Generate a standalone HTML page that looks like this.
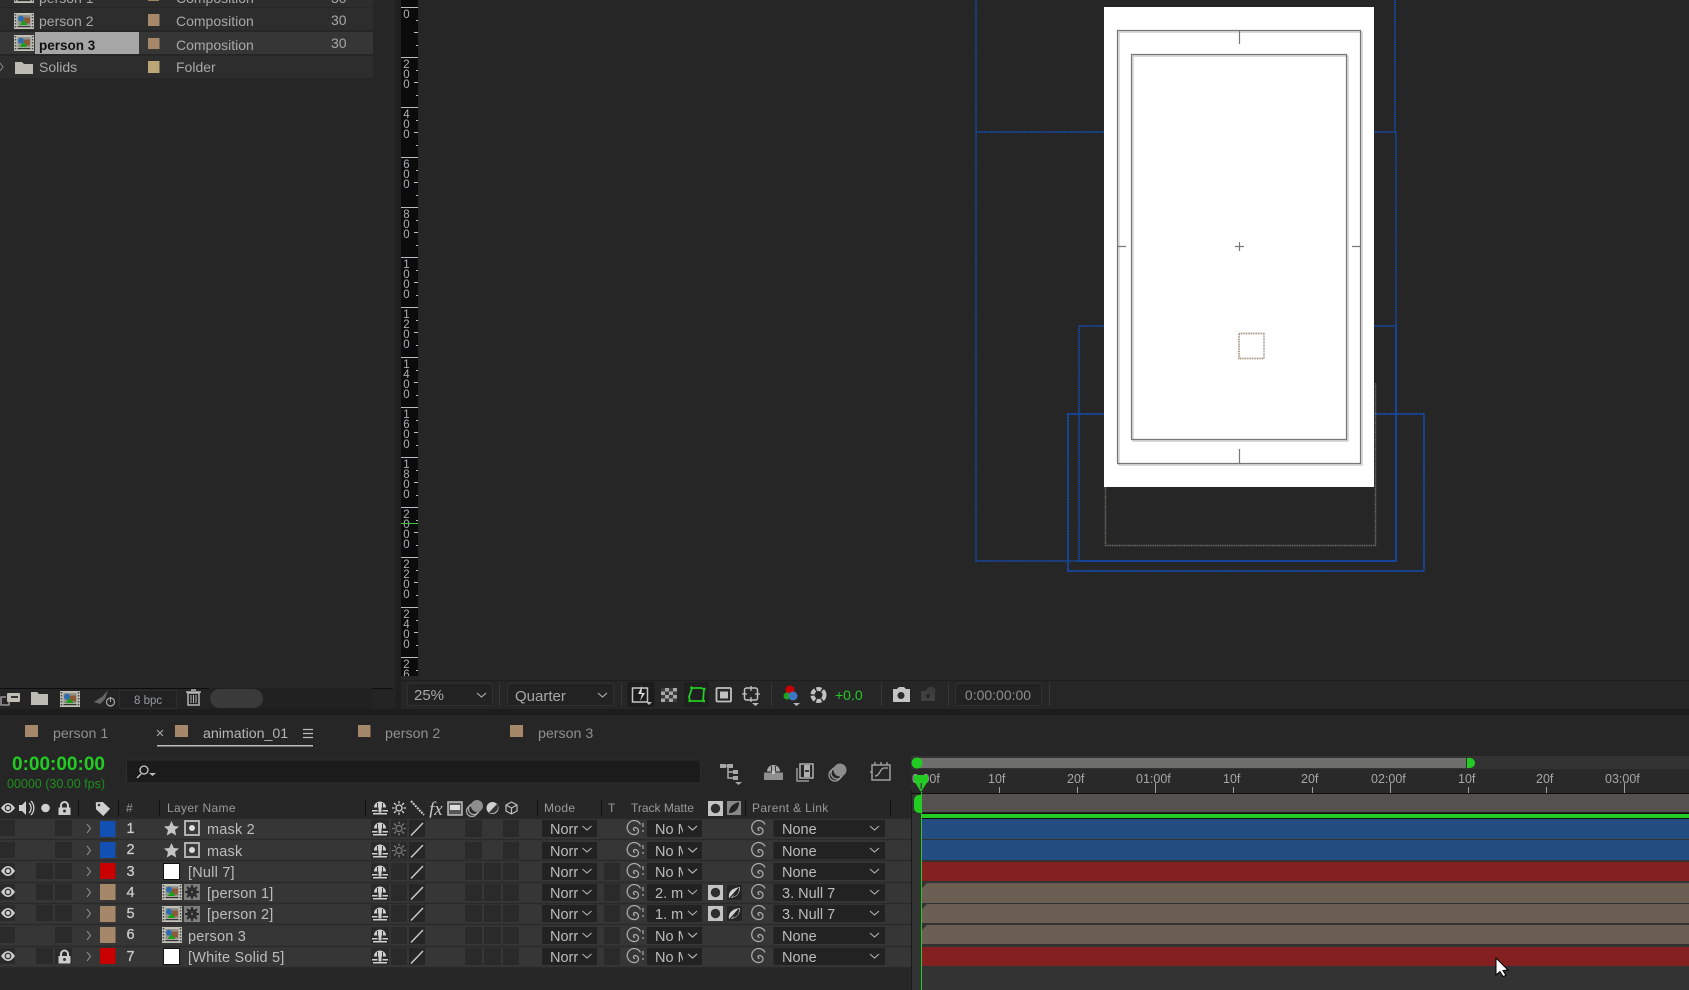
<!DOCTYPE html>
<html lang="en"><head><meta charset="utf-8"><title>After Effects</title>
<style>
html,body{margin:0;padding:0;background:#262626;overflow:hidden}
svg{display:block;position:absolute;left:0;top:0}
text{font-family:"Liberation Sans",sans-serif;font-size:14px;fill:#a8a8a8}
.n{fill:#bdbdbd;font-size:14.5px;letter-spacing:.2px}
.num{fill:#cdcdcd;font-size:14.5px;stroke:#cdcdcd;stroke-width:.25px}
.d{fill:#bcbcbc;font-size:14.5px}
.h{font-size:12px;fill:#9a9a9a;letter-spacing:.35px}
.r{font-size:11.5px;fill:#a8b0b8}
.tl{font-size:12.5px;fill:#a6a6a6}
.tab{font-size:14.2px;fill:#8f8f8f}
</style></head><body>
<svg width="1689" height="990" viewBox="0 0 1689 990" xmlns="http://www.w3.org/2000/svg">
<defs>
<g id="eye"><path d="M0 5Q7-5 14 5 7 15 0 5Z" fill="#cfcfcf"/><circle cx="7" cy="5" r="3.4" fill="#333"/><circle cx="7" cy="5" r="2" fill="#cfcfcf"/></g>
<g id="lock"><path d="M3 7V4.500a3.500 3.500 0 0 1 7 0V7" fill="none" stroke="#cdcdcd" stroke-width="2"/><rect x="0.500" y="6.500" width="12" height="7.500" fill="#cdcdcd"/><circle cx="6.500" cy="10" r="1.500" fill="#333"/></g>
<g id="shy" fill="#d0d0d0"><path d="M2 7.500A6 6 0 0 1 14 7.500Z"/><rect x="6.500" y="7" width="3" height="5.500"/><rect x="0" y="10" width="5.500" height="1.500"/><rect x="10.500" y="10" width="5.500" height="1.500"/><rect x="1" y="13" width="14" height="1.500"/><rect x="5" y="3" width="1" height="5" fill="#333"/><rect x="10" y="3" width="1" height="5" fill="#333"/></g>
<g id="sun" stroke="#7a7a7a" stroke-width="1.300" fill="none"><circle cx="7" cy="7" r="3"/><path d="M7 0v2.500M7 11.500V14M0 7h2.500M11.500 7H14M2 2l2 2M10 10l2 2M12 2l-2 2M4 10l-2 2"/></g>
<g id="spiral" fill="none" stroke="#aaa" stroke-width="1.300"><path d="M8 9.500A1.500 1.500 0 0 1 8 6.500A3.500 3.500 0 0 1 8 13.500A7 7 0 1 1 13.500 3.500"/></g>
<g id="star"><path d="M7.500 0 9.800 5 15 5.500 11 9l1.200 5.500-4.700-2.800-4.700 2.800L4 9 0 5.500 5.200 5Z" fill="#c4c4c4"/></g>
<g id="mk"><rect x="1" y="1" width="14" height="14" fill="#3a3a3a" stroke="#bdbdbd" stroke-width="1.800"/><circle cx="8" cy="8" r="3" fill="#dcdcdc"/></g>
<g id="comp"><rect width="20" height="16" fill="#c0c0b8"/><path d="M1.500 1v14M18.500 1v14" stroke="#444" stroke-dasharray="1.500 1.500" stroke-width="1.500"/><rect x="3.500" y="2" width="13" height="10.500" fill="#92928c"/><rect x="10" y="4.500" width="6" height="6" fill="#8c5a36"/><circle cx="7" cy="5.800" r="3" fill="#2e6bb0"/><path d="M5.500 12l4-5 4 5Z" fill="#18a018"/><rect x="3.500" y="13" width="13" height="1.200" fill="#333"/></g>
<g id="fxb"><rect width="16" height="16" fill="#7e7e7e"/><circle cx="8" cy="8" r="5" fill="#2c2c2c"/><path d="M8 1v3M8 12v3M1 8h3M12 8h3M3 3l2 2M11 11l2 2M13 3l-2 2M5 11l-2 2" stroke="#2c2c2c" stroke-width="2"/><circle cx="8" cy="8" r="1.300" fill="#666"/></g>
<g id="chev"><path d="M0 0l4.500 4L9 0" fill="none" stroke="#b0b0b0" stroke-width="1.100"/></g>
<g id="rchev"><path d="M0 0l3.500 4.500L0 9" fill="none" stroke="#8a8a8a" stroke-width="1.100"/></g>
<g id="slash"><rect width="16" height="17" fill="#262626"/><path d="M2 15.500 14 3" stroke="#c8c8c8" stroke-width="1.500"/></g>
<g id="pr1"><rect width="15" height="15" fill="#c4c4c4"/><circle cx="7.500" cy="7.500" r="4.700" fill="#2e2e2e"/></g>
<g id="pr2"><rect width="15" height="15" fill="#252525"/><path d="M2 13C1 7 5 3 13 2 13 9 9 13 2 13Z" fill="#d0d0d0"/><path d="M3 13 12 3" stroke="#222" stroke-width="1.300"/><path d="M8 8 12 3.500C12 8 10 11 5.500 12Z" fill="#222"/></g>
<g id="tk" stroke="#bdbdbd" stroke-width="1"><path d="M401 7.500h17M414 32.500h4M416 20.500h2M416 45.500h2"/></g>
<g id="rc">
<rect x="371" width="18" height="17" fill="#2a2a2a"/><use href="#shy" x="372" y="1"/>
<use href="#slash" x="409"/>
<rect x="465" width="17" height="17" fill="#2a2a2a"/><rect x="503" width="16" height="17" fill="#2a2a2a"/>
<rect x="542" width="55" height="17" fill="#222"/><use href="#chev" x="582.500" y="6"/>
<use href="#spiral" x="627" y="1"/><path d="M643 3v4M643 10v2" stroke="#aaa" stroke-width="1.200"/>
<rect x="647" width="55" height="17" fill="#222"/><use href="#chev" x="688" y="6"/>
<use href="#spiral" x="751.500" y="1"/>
<rect x="773.500" width="111.500" height="17" fill="#222"/><use href="#chev" x="870" y="6"/>
<use href="#rchev" x="87" y="4"/>
</g>
</defs>

<rect width="1689" height="990" fill="#262626"/>

<!-- project rows -->
<rect x="0" y="0" width="373" height="7" fill="#2d2d2d"/>
<rect x="0" y="8" width="373" height="22" fill="#2d2d2d"/>
<rect x="0" y="32" width="373" height="22" fill="#363636"/>
<rect x="0" y="56" width="373" height="22" fill="#2d2d2d"/>
<rect x="35" y="32" width="104" height="22" fill="#a6a6a6"/>
<use href="#comp" x="14" y="-13"/><use href="#comp" x="14" y="13"/><use href="#comp" x="14" y="35"/>
<text x="39" y="3">person 1</text><text x="176" y="3">Composition</text><text x="331" y="3">30</text>
<rect x="148" y="-7" width="11" height="8" fill="#a0845f"/>
<text x="39" y="26">person 2</text><rect x="148" y="14" width="11.500" height="12" fill="#a5886a"/><text x="176" y="26">Composition</text><text x="331" y="25">30</text>
<text x="39" y="50" style="fill:#111;font-weight:bold;font-size:13.5px">person 3</text><rect x="148" y="38" width="11.500" height="11" fill="#a5886a"/><text x="176" y="50">Composition</text><text x="331" y="48">30</text>
<path d="M0 63l3 4-3 4" fill="none" stroke="#888"/>
<path d="M15 62h7l2 2h9v10H15Z" fill="#bcbcb4"/><text x="39" y="72">Solids</text><rect x="148" y="61" width="11.500" height="12" fill="#bba678"/><text x="176" y="72">Folder</text>

<!-- splitter -->
<rect x="395" y="0" width="6" height="711" fill="#1f1f1f"/>

<!-- ruler -->
<rect x="401" y="0" width="17" height="676" fill="#0b0b0b"/>
<g><use href="#tk"/><use href="#tk" y="50"/><use href="#tk" y="100"/><use href="#tk" y="150"/><use href="#tk" y="200"/><use href="#tk" y="250"/><use href="#tk" y="300"/><use href="#tk" y="350"/><use href="#tk" y="400"/><use href="#tk" y="450"/><use href="#tk" y="500"/><use href="#tk" y="550"/><use href="#tk" y="600"/><use href="#tk" y="650"/></g>
<g text-anchor="middle">
<text class="r" x="406.500" y="18">0</text>
<text class="r" y="68"><tspan x="406.500">2</tspan><tspan x="406.500" dy="10">0</tspan><tspan x="406.500" dy="10">0</tspan></text>
<text class="r" y="118"><tspan x="406.500">4</tspan><tspan x="406.500" dy="10">0</tspan><tspan x="406.500" dy="10">0</tspan></text>
<text class="r" y="168"><tspan x="406.500">6</tspan><tspan x="406.500" dy="10">0</tspan><tspan x="406.500" dy="10">0</tspan></text>
<text class="r" y="218"><tspan x="406.500">8</tspan><tspan x="406.500" dy="10">0</tspan><tspan x="406.500" dy="10">0</tspan></text>
<text class="r" y="268"><tspan x="406.500">1</tspan><tspan x="406.500" dy="10">0</tspan><tspan x="406.500" dy="10">0</tspan><tspan x="406.500" dy="10">0</tspan></text>
<text class="r" y="318"><tspan x="406.500">1</tspan><tspan x="406.500" dy="10">2</tspan><tspan x="406.500" dy="10">0</tspan><tspan x="406.500" dy="10">0</tspan></text>
<text class="r" y="368"><tspan x="406.500">1</tspan><tspan x="406.500" dy="10">4</tspan><tspan x="406.500" dy="10">0</tspan><tspan x="406.500" dy="10">0</tspan></text>
<text class="r" y="418"><tspan x="406.500">1</tspan><tspan x="406.500" dy="10">6</tspan><tspan x="406.500" dy="10">0</tspan><tspan x="406.500" dy="10">0</tspan></text>
<text class="r" y="468"><tspan x="406.500">1</tspan><tspan x="406.500" dy="10">8</tspan><tspan x="406.500" dy="10">0</tspan><tspan x="406.500" dy="10">0</tspan></text>
<text class="r" y="518"><tspan x="406.500">2</tspan><tspan x="406.500" dy="10">0</tspan><tspan x="406.500" dy="10">0</tspan><tspan x="406.500" dy="10">0</tspan></text>
<text class="r" y="568"><tspan x="406.500">2</tspan><tspan x="406.500" dy="10">2</tspan><tspan x="406.500" dy="10">0</tspan><tspan x="406.500" dy="10">0</tspan></text>
<text class="r" y="618"><tspan x="406.500">2</tspan><tspan x="406.500" dy="10">4</tspan><tspan x="406.500" dy="10">0</tspan><tspan x="406.500" dy="10">0</tspan></text>
<text class="r" y="668"><tspan x="406.500">2</tspan><tspan x="406.500" dy="10">6</tspan></text>
</g>
<rect x="401" y="523" width="17" height="1" fill="#3fc43f"/>
<rect x="401" y="676" width="17" height="4" fill="#262626"/>

<!-- guides -->
<g fill="none" stroke="#15469c" stroke-width="2">
<path d="M976 0V561H1079" stroke-dasharray="1.300 .6"/>
<path d="M976 132H1395M1395 0V132" stroke-dasharray="1.300 .6"/>
<path d="M1396 132V326" stroke-dasharray="1.300 .6"/>
<path d="M1079 326H1396M1079 326V561" stroke-dasharray="1.300 .6"/>
<path d="M1079 561H1396V326"/>
<path d="M1068 414H1424V571H1068Z" stroke-dasharray="2.500 .4"/>
</g>
<path d="M1105.500 487V545.500H1375.500V383" fill="none" stroke="#6f6a64" stroke-width="1.500" stroke-dasharray="1.200 .6"/>

<!-- comp -->
<rect x="1104" y="7" width="270" height="480" fill="#fff"/>
<g fill="none" stroke="#cfcfcf" stroke-width="1.500" transform="translate(1.500 1.500)">
<path d="M1117.500 30.500H1360.500V463.500H1117.500Z"/><path d="M1131.500 54.500H1346.500V439.500H1131.500Z"/>
</g>
<g fill="none" stroke="#777" stroke-width="1.200">
<path d="M1117.500 30.500H1360.500V463.500H1117.500Z"/>
<path d="M1131.500 54.500H1346.500V439.500H1131.500Z"/>
<path d="M1239.500 30.500V44M1239.500 449V463M1117.500 246.500H1126M1352 246.500H1361M1235 246.500H1244M1239.500 242V251"/>
</g>
<path d="M1264 333.500H1239V358.500H1264" fill="none" stroke="#a08a70" stroke-width="1.700" stroke-dasharray="1 .7"/>
<path d="M1264 333V359" fill="none" stroke="#b5b5b5" stroke-width="2" stroke-dasharray="1 .5"/>

<!-- viewer toolbar -->
<rect x="401" y="680" width="1288" height="31" fill="#262626"/>
<rect x="401" y="680" width="1288" height="1" fill="#1e1e1e"/>
<g fill="#222" stroke="#303030">
<rect x="407.500" y="683.500" width="85" height="22" rx="2"/>
<rect x="507.500" y="683.500" width="106" height="22" rx="2"/>
<rect x="955.500" y="683.500" width="86" height="22" rx="2"/>
</g>
<text x="414" y="700" style="font-size:15px;fill:#a8a8a8">25%</text><use href="#chev" x="477" y="693"/>
<text x="515" y="701" style="font-size:15px;fill:#a8a8a8">Quarter</text><use href="#chev" x="598" y="693"/>
<path d="M499.500 684v22M621.500 684v22M771.500 684v22M881.500 684v22M948.500 684v22M1049.500 684v22" stroke="#383838"/>
<rect x="627.500" y="682" width="27" height="25" fill="#1c1c1c"/>
<rect x="632.500" y="688" width="15" height="14" fill="none" stroke="#c4c4c4" stroke-width="1.500"/><path d="M642 686l-4 8h4l-2 7 5-8h-3.500Z" fill="#ddd"/><path d="M646 702h6l-3 3Z" fill="#bbb"/>
<rect x="661" y="688" width="16" height="14" fill="#a8a8a8"/><path d="M661 688h4v3.500h-4ZM669 688h4v3.500h-4ZM665 691.500h4v3.500h-4ZM673 691.500h4v3.500h-4ZM661 695h4v3.500h-4ZM669 695h4v3.500h-4ZM665 698.500h4v3.500h-4ZM673 698.500h4v3.500h-4Z" fill="#3a3a3a"/>
<rect x="684" y="682" width="25" height="25" fill="#1f1f1f"/>
<path d="M692 688h9l3 1-1 12h-13l-1-4Z" fill="none" stroke="#22cc22" stroke-width="1.800"/><path d="M690 701h-1.500M704 689h1.500M703 701h2M692 688l-1.500-1" stroke="#22cc22" stroke-width="2.500"/>
<rect x="716.500" y="688" width="14.500" height="13.500" rx="1" fill="none" stroke="#c0c0c0" stroke-width="1.800"/><rect x="720" y="691.500" width="8" height="7" fill="#c0c0c0"/>
<rect x="744.500" y="688" width="13" height="12" rx="2" fill="none" stroke="#c0c0c0" stroke-width="1.500"/><path d="M751 686v5M751 697v5M742 694h5M755 694h5" stroke="#c0c0c0" stroke-width="1.300"/><path d="M752 703h7l-3.500 3Z" fill="#bbb"/>
<circle cx="790" cy="690" r="4.500" fill="#c00"/><circle cx="787" cy="696" r="3.500" fill="#1ba51b"/><circle cx="793" cy="696" r="4.500" fill="#3b78c4"/><path d="M793 703h7l-3.500 3Z" fill="#bbb"/>
<circle cx="818.500" cy="695" r="6" fill="none" stroke="#c0c0c0" stroke-width="4" stroke-dasharray="5 1.500"/>
<text x="835" y="700" style="fill:#22cc22;font-size:14px">+0.0</text>
<path d="M893 689h4l2-2h5l2 2h4v13h-17Z" fill="#c4c4c4"/><circle cx="901" cy="695.500" r="3.500" fill="#2a2a2a"/>
<path d="M921 691h4l2-2h4l2 2h2v10h-14Z" fill="#404040"/><circle cx="931" cy="691" r="4.500" fill="#3c3c3c"/><circle cx="928" cy="696" r="2" fill="#262626"/>
<text x="998" y="700" text-anchor="middle" style="fill:#8d8d8d;font-size:14px">0:00:00:00</text>

<!-- project bottom bar -->
<path d="M0 688.500H209M373 688.500H393" stroke="#0e0e0e"/>
<rect x="0" y="689" width="395" height="20" fill="#242424"/>
<rect x="209" y="688" width="164" height="21" fill="#212121"/>
<rect x="7" y="693" width="13" height="9" rx="1" fill="#bebeb6"/><rect x="11" y="696" width="7" height="2" fill="#333"/><path d="M6 697H1v8h8v-3" fill="none" stroke="#aaa" stroke-width="1.300"/>
<path d="M31 692h6l2 2h9v11H31Z" fill="#bcbcb4"/>
<use href="#comp" x="60" y="691"/>
<path d="M94 702l9-6 5-6-3 9-5 5Z" fill="#666"/><circle cx="110.500" cy="702" r="4" fill="none" stroke="#aaa" stroke-width="1.200"/><path d="M110.500 697v5" stroke="#aaa"/>
<rect x="119.500" y="690.500" width="57" height="18" fill="#222" stroke="#2e2e2e"/>
<text x="134" y="704" style="font-size:11.5px;fill:#959aa3">8 bpc</text>
<path d="M188 693h11v12h-11ZM186 692h15M191 690h5" fill="none" stroke="#b5b5b5" stroke-width="1.500"/><path d="M191 695v8M193.500 695v8M196 695v8" stroke="#b5b5b5"/>
<rect x="210" y="689" width="53" height="19" rx="9.500" fill="#3a3a3a"/>
<rect x="0" y="709" width="1689" height="6" fill="#1d1d1d"/>

<!-- tabs -->
<rect x="25" y="725" width="13" height="12" fill="#a5886a"/><text class="tab" x="53" y="738">person 1</text>
<path d="M157 730l6 6M163 730l-6 6" stroke="#aaa" stroke-width="1.100"/>
<rect x="175" y="725" width="13" height="12" fill="#a5886a"/><text class="tab" x="203" y="738" style="fill:#b5b5b5">animation_01</text>
<path d="M303 729.500h10M303 733.500h10M303 737.500h10" stroke="#bbb" stroke-width="1.300"/>
<rect x="157" y="745" width="156" height="1.500" fill="#bdbdbd"/>
<rect x="358" y="725" width="12.500" height="12" fill="#a5886a"/><text class="tab" x="385" y="738">person 2</text>
<rect x="510" y="725" width="13" height="12" fill="#a5886a"/><text class="tab" x="538" y="738">person 3</text>

<!-- timecode -->
<text x="12" y="770" style="font-weight:bold;font-size:19px;fill:#22cc22">0:00:00:00</text>
<text x="7" y="788" style="font-size:12.5px;fill:#1e8f1e">00000 (30.00 fps)</text>
<rect x="126.500" y="760" width="574" height="23" rx="2" fill="#1b1b1b" stroke="#2d2d2d"/>
<circle cx="144" cy="770" r="4" fill="none" stroke="#ccc" stroke-width="1.300"/><path d="M141 774l-4 4" stroke="#ccc" stroke-width="1.300"/><path d="M149 773h7l-3.500 3Z" fill="#bbb"/>

<!-- timeline header icons -->
<g fill="none" stroke="#a8a8a8" stroke-width="1.500"><path d="M721 766h7v12h6M728 772h6"/></g><g fill="#a8a8a8"><rect x="720" y="764" width="6" height="4"/><rect x="727" y="764" width="6" height="4"/><rect x="733" y="770" width="5" height="4"/><rect x="733" y="776" width="5" height="4"/><path d="M735 782h7l-3.500 3Z"/></g>
<path d="M767 771.500a6.500 6.500 0 0 1 13 0Z" fill="#a8a8a8"/><path d="M771.500 766v5M775.500 766v5" stroke="#333"/><rect x="764" y="772.500" width="19" height="7.500" fill="#8f8f8f"/><rect x="772" y="771" width="3" height="3" fill="#c4c4c4"/>
<rect x="800" y="764" width="13" height="14" fill="none" stroke="#b0b0b0" stroke-width="1.500"/><rect x="804" y="765" width="6" height="12" fill="#b0b0b0"/><rect x="805" y="770" width="4" height="2" fill="#333"/><path d="M797 768v13h12" fill="none" stroke="#999" stroke-width="1.500"/>
<circle cx="835" cy="775" r="6" fill="none" stroke="#999" stroke-width="1.300"/><circle cx="837" cy="773" r="6" fill="none" stroke="#999" stroke-width="1.300"/><circle cx="840" cy="770" r="6.500" fill="#8d8d8d"/>
<rect x="872" y="765" width="18" height="15" fill="none" stroke="#a8a8a8" stroke-width="1.400"/><path d="M875 776c5 0 5-8 9-8h4M875 762v3M881 762v3M887 762v3M870 772h2" fill="none" stroke="#a8a8a8" stroke-width="1.300"/>

<!-- column header -->
<rect x="0" y="796" width="911" height="22" fill="#272727"/>
<use href="#eye" x="1" y="803"/>
<path d="M19 805h3l4-4v14l-4-4h-3Z" fill="#cfcfcf"/><path d="M29 803a7 7 0 0 1 0 10M31 801a10 10 0 0 1 0 14" fill="none" stroke="#cfcfcf" stroke-width="1.300"/>
<circle cx="45.500" cy="808" r="4.300" fill="#cfcfcf"/>
<use href="#lock" x="58" y="801"/>
<path d="M96 802v7l7 7 7-7-7-7Z" fill="#cfcfcf" transform="rotate(-2 103 808)"/><circle cx="99" cy="805" r="1.300" fill="#333"/>
<path d="M78.500 800v16M118.500 800v16M159.500 800v16M365.500 800v16M537.500 800v16M601.500 800v16M745.500 800v16M890.500 800v16" stroke="#111"/>
<text class="h" x="126" y="812">#</text>
<text class="h" x="167" y="812">Layer Name</text>
<use href="#shy" x="372" y="800"/>
<g transform="translate(392 801)"><circle cx="7" cy="7" r="3" fill="none" stroke="#cfcfcf" stroke-width="1.300"/><path d="M7 0v2.500M7 11.500V14M0 7h2.500M11.500 7H14M2 2l2 2M10 10l2 2M12 2l-2 2M4 10l-2 2" stroke="#cfcfcf" stroke-width="1.300"/></g>
<path d="M411 801 424 815" stroke="#cfcfcf" stroke-width="2" stroke-dasharray="2 1"/>
<text x="429" y="815" style="font-family:'Liberation Serif',serif;font-style:italic;font-size:19px;fill:#c4c4c4">fx</text>
<rect x="448" y="802" width="14" height="13" fill="#555" stroke="#bdbdbd" stroke-width="1.500"/><rect x="450" y="805" width="10" height="5" fill="#ddd"/>
<circle cx="472" cy="811" r="5.500" fill="none" stroke="#aaa" stroke-width="1.200"/><circle cx="474" cy="809" r="5.500" fill="none" stroke="#aaa" stroke-width="1.200"/><circle cx="477" cy="806" r="6" fill="#8d8d8d"/>
<circle cx="492.500" cy="808" r="6" fill="#cfcfcf"/><path d="M497 804a6 6 0 0 1-8 8.500Z" fill="#333"/>
<path d="M511.500 802l5.500 3v6l-5.500 3-5.500-3v-6ZM506 805l5.500 3 5.500-3M511.500 808v6" fill="none" stroke="#bdbdbd" stroke-width="1.200"/>
<text class="h" x="544" y="812">Mode</text>
<text class="h" x="608" y="812">T</text>
<text class="h" x="631" y="812" style="letter-spacing:0">Track Matte</text>
<use href="#pr1" x="708" y="801"/><rect x="727" y="801" width="14" height="14" fill="#888"/><path d="M729 813C729 808 732 804 739 802 739 809 735 813 729 813Z" fill="#222"/>
<text class="h" x="752" y="812">Parent &amp; Link</text>

<!-- rows -->
<rect x="0" y="819" width="911" height="148" fill="#363636"/>
<path d="M0 818.500H911M0 839.500H911M0 860.500H911M0 882.500H911M0 903.500H911M0 924.500H911M0 946.500H911M0 967.500H911" stroke="#2a2a2a" stroke-width="1.500"/>

<g transform="translate(0 820)">
<use href="#rc"/><rect width="15" height="16" fill="#2a2a2a"/><rect x="55" width="17" height="16" fill="#2a2a2a"/>
<rect x="100" y="1" width="15.500" height="16" fill="#1250b4"/>
<text class="num" x="126.500" y="13">1</text>
<use href="#star" x="164" y="1"/><use href="#mk" x="184"/>
<text class="n" x="207" y="14">mask 2</text>
<rect x="391" width="16" height="17" fill="#2a2a2a"/><use href="#sun" x="392" y="1.500"/>
<text class="d" x="550" y="14">Norr</text><text class="d" x="655" y="14">No M</text><rect x="683" y="1" width="6" height="15" fill="#222"/><use href="#chev" x="688" y="6"/><text class="d" x="782" y="14">None</text>
</g>
<g transform="translate(0 842)">
<use href="#rc"/><rect width="15" height="16" fill="#2a2a2a"/><rect x="55" width="17" height="16" fill="#2a2a2a"/>
<rect x="100" width="15.500" height="16" fill="#1250b4"/>
<text class="num" x="126.500" y="12">2</text>
<use href="#star" x="164" y="1"/><use href="#mk" x="184"/>
<text class="n" x="207" y="14">mask</text>
<rect x="391" width="16" height="17" fill="#2a2a2a"/><use href="#sun" x="392" y="1.500"/>
<text class="d" x="550" y="14">Norr</text><text class="d" x="655" y="14">No M</text><rect x="683" y="1" width="6" height="15" fill="#222"/><use href="#chev" x="688" y="6"/><text class="d" x="782" y="14">None</text>
</g>
<g transform="translate(0 863)">
<use href="#rc"/><rect width="15" height="16" fill="#2a2a2a"/><rect x="36" width="17" height="16" fill="#2a2a2a"/><rect x="55" width="17" height="16" fill="#2a2a2a"/>
<use href="#eye" x="1" y="3"/>
<rect x="100" width="15.500" height="16" fill="#c80000"/>
<text class="num" x="126.500" y="13">3</text>
<rect x="163.500" y=".5" width="16" height="16" fill="#fff" stroke="#111"/>
<text class="n" x="188" y="14">[Null 7]</text>
<rect x="391" width="16" height="17" fill="#2a2a2a"/><rect x="484" width="17" height="17" fill="#2a2a2a"/><rect x="604" width="16" height="17" fill="#2a2a2a"/>
<text class="d" x="550" y="14">Norr</text><text class="d" x="655" y="14">No M</text><rect x="683" y="1" width="6" height="15" fill="#222"/><use href="#chev" x="688" y="6"/><text class="d" x="782" y="14">None</text>
</g>
<g transform="translate(0 884)">
<use href="#rc"/><rect width="15" height="16" fill="#2a2a2a"/><rect x="36" width="17" height="16" fill="#2a2a2a"/><rect x="55" width="17" height="16" fill="#2a2a2a"/>
<use href="#eye" x="1" y="3"/>
<rect x="100" width="15.500" height="16" fill="#a5886a"/>
<text class="num" x="126.500" y="13">4</text>
<use href="#comp" x="162"/><use href="#fxb" x="184"/>
<text class="n" x="207" y="14">[person 1]</text>
<rect x="391" width="16" height="17" fill="#2a2a2a"/><rect x="484" width="17" height="17" fill="#2a2a2a"/><rect x="604" width="16" height="17" fill="#2a2a2a"/>
<text class="d" x="550" y="14">Norr</text><text class="d" x="655" y="14">2. m</text><text class="d" x="782" y="14">3. Null 7</text>
<use href="#pr1" x="708" y="1"/><use href="#pr2" x="727" y="1"/>
</g>
<g transform="translate(0 905)">
<use href="#rc"/><rect width="15" height="16" fill="#2a2a2a"/><rect x="36" width="17" height="16" fill="#2a2a2a"/><rect x="55" width="17" height="16" fill="#2a2a2a"/>
<use href="#eye" x="1" y="3"/>
<rect x="100" y="1" width="15.500" height="16" fill="#a5886a"/>
<text class="num" x="126.500" y="13">5</text>
<use href="#comp" x="162" y="1"/><use href="#fxb" x="184" y="1"/>
<text class="n" x="207" y="14">[person 2]</text>
<rect x="391" width="16" height="17" fill="#2a2a2a"/><rect x="484" width="17" height="17" fill="#2a2a2a"/><rect x="604" width="16" height="17" fill="#2a2a2a"/>
<text class="d" x="550" y="14">Norr</text><text class="d" x="655" y="14">1. m</text><text class="d" x="782" y="14">3. Null 7</text>
<use href="#pr1" x="708" y="1"/><use href="#pr2" x="727" y="1"/>
</g>
<g transform="translate(0 927)">
<use href="#rc"/><rect width="15" height="16" fill="#2a2a2a"/><rect x="55" width="17" height="16" fill="#2a2a2a"/>
<rect x="100" width="15.500" height="16" fill="#a5886a"/>
<text class="num" x="126.500" y="12">6</text>
<use href="#comp" x="162"/>
<text class="n" x="188" y="14">person 3</text>
<rect x="391" width="16" height="17" fill="#2a2a2a"/><rect x="484" width="17" height="17" fill="#2a2a2a"/><rect x="604" width="16" height="17" fill="#2a2a2a"/>
<text class="d" x="550" y="14">Norr</text><text class="d" x="655" y="14">No M</text><rect x="683" y="1" width="6" height="15" fill="#222"/><use href="#chev" x="688" y="6"/><text class="d" x="782" y="14">None</text>
</g>
<g transform="translate(0 948)">
<use href="#rc"/><rect width="15" height="16" fill="#2a2a2a"/><rect x="36" width="17" height="16" fill="#2a2a2a"/><rect x="55" width="17" height="16" fill="#2a2a2a"/>
<use href="#eye" x="1" y="3"/><use href="#lock" x="58" y="1.500"/>
<rect x="100" width="15.500" height="16" fill="#c80000"/>
<text class="num" x="126.500" y="13">7</text>
<rect x="163.500" y=".5" width="16" height="16" fill="#fff" stroke="#111"/>
<text class="n" x="188" y="14">[White Solid 5]</text>
<rect x="391" width="16" height="17" fill="#2a2a2a"/><rect x="484" width="17" height="17" fill="#2a2a2a"/><rect x="604" width="16" height="17" fill="#2a2a2a"/>
<text class="d" x="550" y="14">Norr</text><text class="d" x="655" y="14">No M</text><rect x="683" y="1" width="6" height="15" fill="#222"/><use href="#chev" x="688" y="6"/><text class="d" x="782" y="14">None</text>
</g>

<!-- timeline -->
<rect x="911" y="756" width="778" height="13" fill="#333"/>
<rect x="917" y="758" width="549" height="10" fill="#6e6e6c"/>
<circle cx="917" cy="763" r="5.500" fill="#22cc22"/>
<path d="M1467 758h3a5 5 0 0 1 0 10h-3Z" fill="#22cc22"/>
<rect x="911" y="769" width="778" height="24" fill="#292929"/>
<text class="tl" x="912" y="783">0:00f</text>
<text class="tl" x="988" y="783">10f</text>
<text class="tl" x="1067" y="783">20f</text>
<text class="tl" x="1136" y="783">01:00f</text>
<text class="tl" x="1223" y="783">10f</text>
<text class="tl" x="1301" y="783">20f</text>
<text class="tl" x="1371" y="783">02:00f</text>
<text class="tl" x="1458" y="783">10f</text>
<text class="tl" x="1536" y="783">20f</text>
<text class="tl" x="1605" y="783">03:00f</text>
<path d="M999.500 787v6M1077.500 787v6M1233.500 787v6M1312.500 787v6M1468.500 787v6M1546.500 787v6M1155.500 783v10M1390.500 783v10M1624.500 783v10" stroke="#a0a0a0"/>
<rect x="911" y="793" width="778" height="1" fill="#0f0f0f"/>
<rect x="911" y="794" width="778" height="196" fill="#333"/>
<rect x="921" y="794" width="768" height="18" fill="#55514e"/>
<rect x="912" y="812" width="777" height="1" fill="#222"/>
<rect x="921" y="813" width="768" height="1" fill="#111"/>
<rect x="921" y="814" width="768" height="4" fill="#22cc22"/>
<rect x="921" y="818" width="768" height="1" fill="#111"/>
<rect x="921" y="819" width="768" height="20" fill="#234d81"/>
<rect x="921" y="840" width="768" height="20" fill="#234d81"/>
<rect x="921" y="862" width="768" height="19" fill="#842020"/>
<rect x="921" y="883" width="768" height="20" fill="#6a5f52"/>
<rect x="921" y="904" width="768" height="19" fill="#6a5f52"/>
<rect x="921" y="925" width="768" height="19" fill="#6a5f52"/>
<rect x="921" y="947" width="768" height="19" fill="#842020"/>
<path d="M921 883h6l-5 5h-1ZM921 904h6l-5 5h-1ZM921 925h6l-5 5h-1Z" fill="#333"/>
<rect x="911" y="790" width="1" height="200" fill="#1a1a1a"/>
<path d="M921 795h-2a5 5 0 0 0-5 5v8a5 5 0 0 0 5 5h2Z" fill="#22cc22"/>
<path d="M914 775h14v6l-7 11-7-11Z" fill="#22cc22"/>
<rect x="920.500" y="783" width="1.500" height="6" fill="#444"/>
<rect x="921" y="792" width="1" height="198" fill="#22cc22"/>

<!-- cursor -->
<path d="M1496 958V975l4-3.500 3 5 3-1-3-5 5-.5Z" fill="#fff" stroke="#000" stroke-width="1"/>
</svg>
</body></html>
